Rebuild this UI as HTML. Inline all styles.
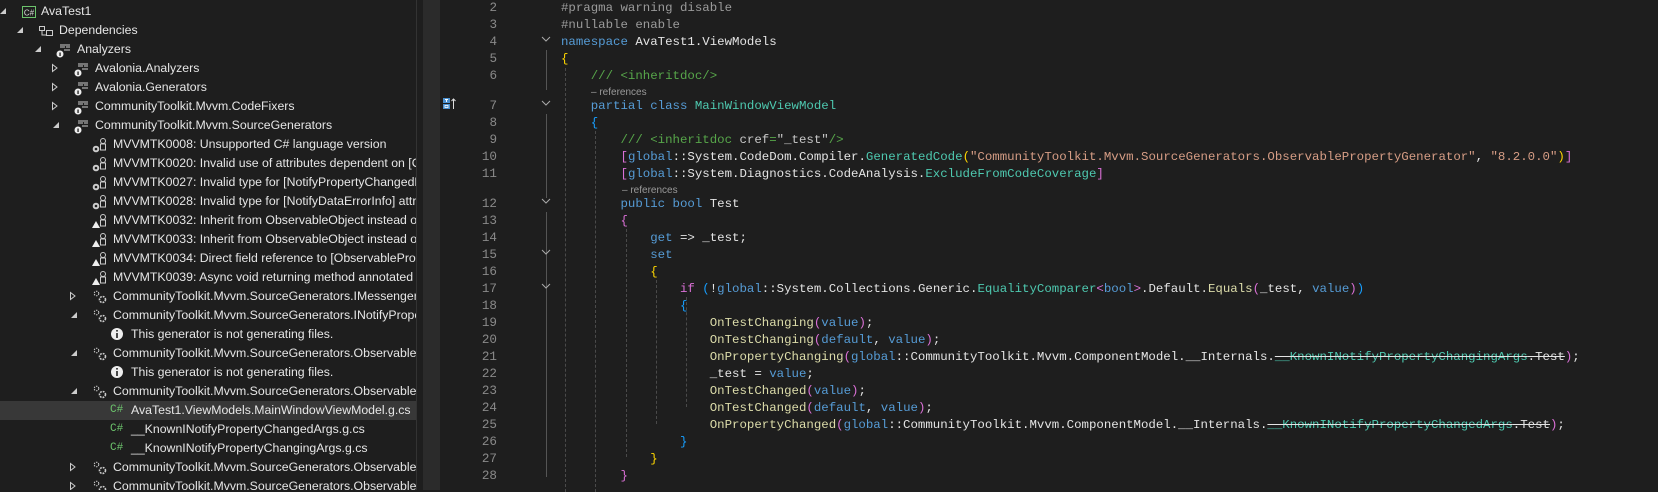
<!DOCTYPE html>
<html><head><meta charset="utf-8"><style>
body{margin:0;width:1658px;height:490px;background:#1e1e1e;overflow:hidden;position:relative;font-family:"Liberation Sans",sans-serif}
#tree{position:absolute;left:0;top:0;width:416px;height:490px;overflow:hidden;background:#1e1e1e}
.r{position:absolute;left:0;width:416px;height:19px;color:#e6e6e6;font-size:12.3px;line-height:19px;white-space:nowrap}
.r .t{position:absolute;top:0}
.r svg{position:absolute;top:2px}
.sel{background:#383838}
#sep{position:absolute;left:416px;top:0;width:1px;height:490px;background:#333}
#strip{position:absolute;left:423px;top:0;width:17px;height:490px;background:#2b2b2b}
.ln{position:absolute;left:440px;width:57px;text-align:right;color:#8a8a8a;font-family:"Liberation Mono",monospace;font-size:12.6px;line-height:17px}
.c{position:absolute;left:561px;white-space:pre;font-family:"Liberation Mono",monospace;font-size:12.4px;line-height:17px;color:#e4e4e4}
.ref{position:absolute;font-size:10px;color:#9a9a9a;line-height:13px}
.k{color:#569cd6}.ty{color:#4ec9b0}.cm{color:#57a64a}.s{color:#d69d85}.m{color:#dcdcaa}.p{color:#9b9b9b}
.y{color:#ffd700}.pk{color:#da70d6}.b{color:#179fff}.x{color:#c8c8c8}
.st{text-decoration:line-through}
.g{position:absolute;width:0;border-left:1px dashed #4a4a4a}
.fold{position:absolute;left:546px;width:1px;background:#555}
.chev{position:absolute;left:541px}
#code{position:absolute;left:0;top:2px;width:1658px;height:490px}
</style></head><body>
<div id="tree">
<div class="r" style="top:2px"><svg style="left:0" width="8" height="14"><path d="M6 4V10H0Z" fill="#ccc"/></svg><svg style="left:21px" width="16" height="16"><rect x="1.5" y="2.5" width="13" height="11" fill="none" stroke="#6cc36c"/><text x="8" y="11.5" font-size="8" fill="#ddd" text-anchor="middle" font-family="Liberation Sans">C#</text></svg><span class="t" style="left:41px">AvaTest1</span></div>
<div class="r" style="top:21px"><svg style="left:17px" width="8" height="14"><path d="M6 4V10H0Z" fill="#ccc"/></svg><svg style="left:38px" width="16" height="16"><g fill="none" stroke="#ccc"><rect x="1.5" y="3.5" width="5" height="4"/><rect x="8.5" y="7.5" width="6" height="5"/><path d="M4 8V12H8"/></g></svg><span class="t" style="left:59px">Dependencies</span></div>
<div class="r" style="top:40px"><svg style="left:35px" width="8" height="14"><path d="M6 4V10H0Z" fill="#ccc"/></svg><svg style="left:56px" width="16" height="16"><g stroke="#ccc"><path d="M4 3H14M4 5H9M10 5H14M8 8H14"/></g><circle cx="4" cy="12" r="3.5" fill="#eee"/><rect x="3.4" y="10.5" width="1.3" height="3.5" fill="#1e1e1e"/></svg><span class="t" style="left:77px">Analyzers</span></div>
<div class="r" style="top:59px"><svg style="left:51px" width="8" height="14"><path d="M1.5 3.5L6 7L1.5 10.5Z" fill="none" stroke="#ccc"/></svg><svg style="left:74px" width="16" height="16"><g stroke="#ccc"><path d="M4 3H14M4 5H9M10 5H14M8 8H14"/></g><circle cx="4" cy="12" r="3.5" fill="#eee"/><rect x="3.4" y="10.5" width="1.3" height="3.5" fill="#1e1e1e"/></svg><span class="t" style="left:95px">Avalonia.Analyzers</span></div>
<div class="r" style="top:78px"><svg style="left:51px" width="8" height="14"><path d="M1.5 3.5L6 7L1.5 10.5Z" fill="none" stroke="#ccc"/></svg><svg style="left:74px" width="16" height="16"><g stroke="#ccc"><path d="M4 3H14M4 5H9M10 5H14M8 8H14"/></g><circle cx="4" cy="12" r="3.5" fill="#eee"/><rect x="3.4" y="10.5" width="1.3" height="3.5" fill="#1e1e1e"/></svg><span class="t" style="left:95px">Avalonia.Generators</span></div>
<div class="r" style="top:97px"><svg style="left:51px" width="8" height="14"><path d="M1.5 3.5L6 7L1.5 10.5Z" fill="none" stroke="#ccc"/></svg><svg style="left:74px" width="16" height="16"><g stroke="#ccc"><path d="M4 3H14M4 5H9M10 5H14M8 8H14"/></g><circle cx="4" cy="12" r="3.5" fill="#eee"/><rect x="3.4" y="10.5" width="1.3" height="3.5" fill="#1e1e1e"/></svg><span class="t" style="left:95px">CommunityToolkit.Mvvm.CodeFixers</span></div>
<div class="r" style="top:116px"><svg style="left:53px" width="8" height="14"><path d="M6 4V10H0Z" fill="#ccc"/></svg><svg style="left:74px" width="16" height="16"><g stroke="#ccc"><path d="M4 3H14M4 5H9M10 5H14M8 8H14"/></g><circle cx="4" cy="12" r="3.5" fill="#eee"/><rect x="3.4" y="10.5" width="1.3" height="3.5" fill="#1e1e1e"/></svg><span class="t" style="left:95px">CommunityToolkit.Mvvm.SourceGenerators</span></div>
<div class="r" style="top:135px"><svg style="left:92px" width="16" height="16"><circle cx="4" cy="12" r="3.3" fill="#ccc"/><circle cx="4" cy="12" r="1.3" fill="#1e1e1e"/><g fill="none" stroke="#ccc"><circle cx="11" cy="4" r="2.5"/><rect x="8.5" y="7" width="5" height="6"/></g></svg><span class="t" style="left:113px">MVVMTK0008: Unsupported C# language version</span></div>
<div class="r" style="top:154px"><svg style="left:92px" width="16" height="16"><circle cx="4" cy="12" r="3.3" fill="#ccc"/><circle cx="4" cy="12" r="1.3" fill="#1e1e1e"/><g fill="none" stroke="#ccc"><circle cx="11" cy="4" r="2.5"/><rect x="8.5" y="7" width="5" height="6"/></g></svg><span class="t" style="left:113px">MVVMTK0020: Invalid use of attributes dependent on [ObservableProperty]</span></div>
<div class="r" style="top:173px"><svg style="left:92px" width="16" height="16"><circle cx="4" cy="12" r="3.3" fill="#ccc"/><circle cx="4" cy="12" r="1.3" fill="#1e1e1e"/><g fill="none" stroke="#ccc"><circle cx="11" cy="4" r="2.5"/><rect x="8.5" y="7" width="5" height="6"/></g></svg><span class="t" style="left:113px">MVVMTK0027: Invalid type for [NotifyPropertyChangedRecipients]</span></div>
<div class="r" style="top:192px"><svg style="left:92px" width="16" height="16"><circle cx="4" cy="12" r="3.3" fill="#ccc"/><circle cx="4" cy="12" r="1.3" fill="#1e1e1e"/><g fill="none" stroke="#ccc"><circle cx="11" cy="4" r="2.5"/><rect x="8.5" y="7" width="5" height="6"/></g></svg><span class="t" style="left:113px">MVVMTK0028: Invalid type for [NotifyDataErrorInfo] attribute</span></div>
<div class="r" style="top:211px"><svg style="left:92px" width="16" height="16"><path d="M4 8L8 15H0Z" fill="#eee"/><g fill="none" stroke="#ccc"><circle cx="11" cy="4" r="2.5"/><rect x="8.5" y="7" width="5" height="6"/></g></svg><span class="t" style="left:113px">MVVMTK0032: Inherit from ObservableObject instead of using</span></div>
<div class="r" style="top:230px"><svg style="left:92px" width="16" height="16"><path d="M4 8L8 15H0Z" fill="#eee"/><g fill="none" stroke="#ccc"><circle cx="11" cy="4" r="2.5"/><rect x="8.5" y="7" width="5" height="6"/></g></svg><span class="t" style="left:113px">MVVMTK0033: Inherit from ObservableObject instead of using</span></div>
<div class="r" style="top:249px"><svg style="left:92px" width="16" height="16"><path d="M4 8L8 15H0Z" fill="#eee"/><g fill="none" stroke="#ccc"><circle cx="11" cy="4" r="2.5"/><rect x="8.5" y="7" width="5" height="6"/></g></svg><span class="t" style="left:113px">MVVMTK0034: Direct field reference to [ObservableProperty]</span></div>
<div class="r" style="top:268px"><svg style="left:92px" width="16" height="16"><path d="M4 8L8 15H0Z" fill="#eee"/><g fill="none" stroke="#ccc"><circle cx="11" cy="4" r="2.5"/><rect x="8.5" y="7" width="5" height="6"/></g></svg><span class="t" style="left:113px">MVVMTK0039: Async void returning method annotated with</span></div>
<div class="r" style="top:287px"><svg style="left:69px" width="8" height="14"><path d="M1.5 3.5L6 7L1.5 10.5Z" fill="none" stroke="#ccc"/></svg><svg style="left:92px" width="16" height="16"><g fill="none" stroke="#ccc"><circle cx="4.5" cy="4.5" r="2.3" stroke-dasharray="1.5 1"/><circle cx="10.5" cy="10.5" r="3" stroke-width="1.6" stroke-dasharray="1.8 1"/></g></svg><span class="t" style="left:113px">CommunityToolkit.Mvvm.SourceGenerators.IMessengerRegisterAllGenerator</span></div>
<div class="r" style="top:306px"><svg style="left:71px" width="8" height="14"><path d="M6 4V10H0Z" fill="#ccc"/></svg><svg style="left:92px" width="16" height="16"><g fill="none" stroke="#ccc"><circle cx="4.5" cy="4.5" r="2.3" stroke-dasharray="1.5 1"/><circle cx="10.5" cy="10.5" r="3" stroke-width="1.6" stroke-dasharray="1.8 1"/></g></svg><span class="t" style="left:113px">CommunityToolkit.Mvvm.SourceGenerators.INotifyPropertyChangedGenerator</span></div>
<div class="r" style="top:325px"><svg style="left:110px" width="16" height="16"><circle cx="7" cy="7" r="6" fill="#eee"/><rect x="6.2" y="6" width="1.6" height="5" fill="#1e1e1e"/><rect x="6.2" y="3" width="1.6" height="1.6" fill="#1e1e1e"/></svg><span class="t" style="left:131px">This generator is not generating files.</span></div>
<div class="r" style="top:344px"><svg style="left:71px" width="8" height="14"><path d="M6 4V10H0Z" fill="#ccc"/></svg><svg style="left:92px" width="16" height="16"><g fill="none" stroke="#ccc"><circle cx="4.5" cy="4.5" r="2.3" stroke-dasharray="1.5 1"/><circle cx="10.5" cy="10.5" r="3" stroke-width="1.6" stroke-dasharray="1.8 1"/></g></svg><span class="t" style="left:113px">CommunityToolkit.Mvvm.SourceGenerators.ObservableObjectGenerator</span></div>
<div class="r" style="top:363px"><svg style="left:110px" width="16" height="16"><circle cx="7" cy="7" r="6" fill="#eee"/><rect x="6.2" y="6" width="1.6" height="5" fill="#1e1e1e"/><rect x="6.2" y="3" width="1.6" height="1.6" fill="#1e1e1e"/></svg><span class="t" style="left:131px">This generator is not generating files.</span></div>
<div class="r" style="top:382px"><svg style="left:71px" width="8" height="14"><path d="M6 4V10H0Z" fill="#ccc"/></svg><svg style="left:92px" width="16" height="16"><g fill="none" stroke="#ccc"><circle cx="4.5" cy="4.5" r="2.3" stroke-dasharray="1.5 1"/><circle cx="10.5" cy="10.5" r="3" stroke-width="1.6" stroke-dasharray="1.8 1"/></g></svg><span class="t" style="left:113px">CommunityToolkit.Mvvm.SourceGenerators.ObservablePropertyGenerator</span></div>
<div class="r sel" style="top:401px"><span class="t" style="left:110px;color:#6cc36c;font-family:'Liberation Mono',monospace;font-size:11px">C#</span><span class="t" style="left:131px">AvaTest1.ViewModels.MainWindowViewModel.g.cs</span></div>
<div class="r" style="top:420px"><span class="t" style="left:110px;color:#6cc36c;font-family:'Liberation Mono',monospace;font-size:11px">C#</span><span class="t" style="left:131px">__KnownINotifyPropertyChangedArgs.g.cs</span></div>
<div class="r" style="top:439px"><span class="t" style="left:110px;color:#6cc36c;font-family:'Liberation Mono',monospace;font-size:11px">C#</span><span class="t" style="left:131px">__KnownINotifyPropertyChangingArgs.g.cs</span></div>
<div class="r" style="top:458px"><svg style="left:69px" width="8" height="14"><path d="M1.5 3.5L6 7L1.5 10.5Z" fill="none" stroke="#ccc"/></svg><svg style="left:92px" width="16" height="16"><g fill="none" stroke="#ccc"><circle cx="4.5" cy="4.5" r="2.3" stroke-dasharray="1.5 1"/><circle cx="10.5" cy="10.5" r="3" stroke-width="1.6" stroke-dasharray="1.8 1"/></g></svg><span class="t" style="left:113px">CommunityToolkit.Mvvm.SourceGenerators.ObservableRecipientGenerator</span></div>
<div class="r" style="top:477px"><svg style="left:69px" width="8" height="14"><path d="M1.5 3.5L6 7L1.5 10.5Z" fill="none" stroke="#ccc"/></svg><svg style="left:92px" width="16" height="16"><g fill="none" stroke="#ccc"><circle cx="4.5" cy="4.5" r="2.3" stroke-dasharray="1.5 1"/><circle cx="10.5" cy="10.5" r="3" stroke-width="1.6" stroke-dasharray="1.8 1"/></g></svg><span class="t" style="left:113px">CommunityToolkit.Mvvm.SourceGenerators.ObservableValidatorGenerator</span></div>
</div>
<div id="sep"></div><div id="strip"></div>

<div id="code">
<svg style="position:absolute;left:443px;top:96px" width="14" height="12"><rect x="0" y="0" width="7" height="5" fill="#4a90d0"/><rect x="0" y="6" width="7" height="5" fill="#4a90d0"/><path d="M2 1.5H5M3.5 1.5V4" stroke="#fff"/><rect x="2" y="7.5" width="3" height="2" fill="none" stroke="#fff" stroke-width=".8"/><path d="M10.5 11V1M8.5 3L10.5 1L12.5 3" stroke="#ddd" fill="none"/></svg>

<div class="fold" style="top:48px;height:40px"></div>
<div class="fold" style="top:112px;height:84px"></div>
<div class="fold" style="top:210px;height:265px"></div>
<div class="g" style="left:565px;top:66px;height:424px"></div>
<div class="g" style="left:595px;top:129px;height:361px"></div>
<div class="g" style="left:626px;top:227px;height:228px"></div>
<div class="g" style="left:656px;top:278px;height:144px"></div>
<div class="g" style="left:686px;top:295px;height:110px"></div>
<svg class="chev" style="top:32px" width="10" height="10"><path d="M1 3L5 7L9 3" fill="none" stroke="#aaa"/></svg>
<svg class="chev" style="top:96px" width="10" height="10"><path d="M1 3L5 7L9 3" fill="none" stroke="#aaa"/></svg>
<svg class="chev" style="top:194px" width="10" height="10"><path d="M1 3L5 7L9 3" fill="none" stroke="#aaa"/></svg>
<svg class="chev" style="top:245px" width="10" height="10"><path d="M1 3L5 7L9 3" fill="none" stroke="#aaa"/></svg>
<svg class="chev" style="top:279px" width="10" height="10"><path d="M1 3L5 7L9 3" fill="none" stroke="#aaa"/></svg>

<div class="ln" style="top:-2px">2</div><div class="ln" style="top:15px">3</div><div class="ln" style="top:32px">4</div><div class="ln" style="top:49px">5</div><div class="ln" style="top:66px">6</div>
<div class="ln" style="top:96px">7</div><div class="ln" style="top:113px">8</div><div class="ln" style="top:130px">9</div><div class="ln" style="top:147px">10</div><div class="ln" style="top:164px">11</div>
<div class="ln" style="top:194px">12</div><div class="ln" style="top:211px">13</div><div class="ln" style="top:228px">14</div><div class="ln" style="top:245px">15</div><div class="ln" style="top:262px">16</div><div class="ln" style="top:279px">17</div><div class="ln" style="top:296px">18</div><div class="ln" style="top:313px">19</div><div class="ln" style="top:330px">20</div><div class="ln" style="top:347px">21</div><div class="ln" style="top:364px">22</div><div class="ln" style="top:381px">23</div><div class="ln" style="top:398px">24</div><div class="ln" style="top:415px">25</div><div class="ln" style="top:432px">26</div><div class="ln" style="top:449px">27</div><div class="ln" style="top:466px">28</div>

<div class="c" style="top:-2px"><span class="p">#pragma warning disable</span></div>
<div class="c" style="top:15px"><span class="p">#nullable enable</span></div>
<div class="c" style="top:32px"><span class="k">namespace</span> AvaTest1.ViewModels</div>
<div class="c" style="top:49px"><span class="y">{</span></div>
<div class="c" style="top:66px">    <span class="cm">/// &lt;inheritdoc/&gt;</span></div>
<div class="ref" style="left:591px;top:84px">– references</div>
<div class="c" style="top:96px">    <span class="k">partial class</span> <span class="ty">MainWindowViewModel</span></div>
<div class="c" style="top:113px">    <span class="b">{</span></div>
<div class="c" style="top:130px">        <span class="cm">/// &lt;inheritdoc </span><span class="x">cref</span><span class="cm">=</span><span class="x">"_test"</span><span class="cm">/&gt;</span></div>
<div class="c" style="top:147px">        <span class="pk">[</span><span class="k">global</span>::System.CodeDom.Compiler.<span class="ty">GeneratedCode</span><span class="y">(</span><span class="s">"CommunityToolkit.Mvvm.SourceGenerators.ObservablePropertyGenerator"</span>, <span class="s">"8.2.0.0"</span><span class="y">)</span><span class="pk">]</span></div>
<div class="c" style="top:164px">        <span class="pk">[</span><span class="k">global</span>::System.Diagnostics.CodeAnalysis.<span class="ty">ExcludeFromCodeCoverage</span><span class="pk">]</span></div>
<div class="ref" style="left:622px;top:182px">– references</div>
<div class="c" style="top:194px">        <span class="k">public bool</span> Test</div>
<div class="c" style="top:211px">        <span class="pk">{</span></div>
<div class="c" style="top:228px">            <span class="k">get</span> =&gt; _test;</div>
<div class="c" style="top:245px">            <span class="k">set</span></div>
<div class="c" style="top:262px">            <span class="y">{</span></div>
<div class="c" style="top:279px">                <span class="pk">if</span> <span class="b">(</span>!<span class="k">global</span>::System.Collections.Generic.<span class="ty">EqualityComparer</span><span class="pk">&lt;</span><span class="k">bool</span><span class="pk">&gt;</span>.Default.<span class="m">Equals</span><span class="pk">(</span>_test, <span class="k">value</span><span class="pk">)</span><span class="b">)</span></div>
<div class="c" style="top:296px">                <span class="b">{</span></div>
<div class="c" style="top:313px">                    <span class="m">OnTestChanging</span><span class="pk">(</span><span class="k">value</span><span class="pk">)</span>;</div>
<div class="c" style="top:330px">                    <span class="m">OnTestChanging</span><span class="pk">(</span><span class="k">default</span>, <span class="k">value</span><span class="pk">)</span>;</div>
<div class="c" style="top:347px">                    <span class="m">OnPropertyChanging</span><span class="pk">(</span><span class="k">global</span>::CommunityToolkit.Mvvm.ComponentModel.__Internals.<span class="st"><span class="ty">__KnownINotifyPropertyChangingArgs</span>.Test</span><span class="pk">)</span>;</div>
<div class="c" style="top:364px">                    _test = <span class="k">value</span>;</div>
<div class="c" style="top:381px">                    <span class="m">OnTestChanged</span><span class="pk">(</span><span class="k">value</span><span class="pk">)</span>;</div>
<div class="c" style="top:398px">                    <span class="m">OnTestChanged</span><span class="pk">(</span><span class="k">default</span>, <span class="k">value</span><span class="pk">)</span>;</div>
<div class="c" style="top:415px">                    <span class="m">OnPropertyChanged</span><span class="pk">(</span><span class="k">global</span>::CommunityToolkit.Mvvm.ComponentModel.__Internals.<span class="st"><span class="ty">__KnownINotifyPropertyChangedArgs</span>.Test</span><span class="pk">)</span>;</div>
<div class="c" style="top:432px">                <span class="b">}</span></div>
<div class="c" style="top:449px">            <span class="y">}</span></div>
<div class="c" style="top:466px">        <span class="pk">}</span></div>
</div>
</body></html>
